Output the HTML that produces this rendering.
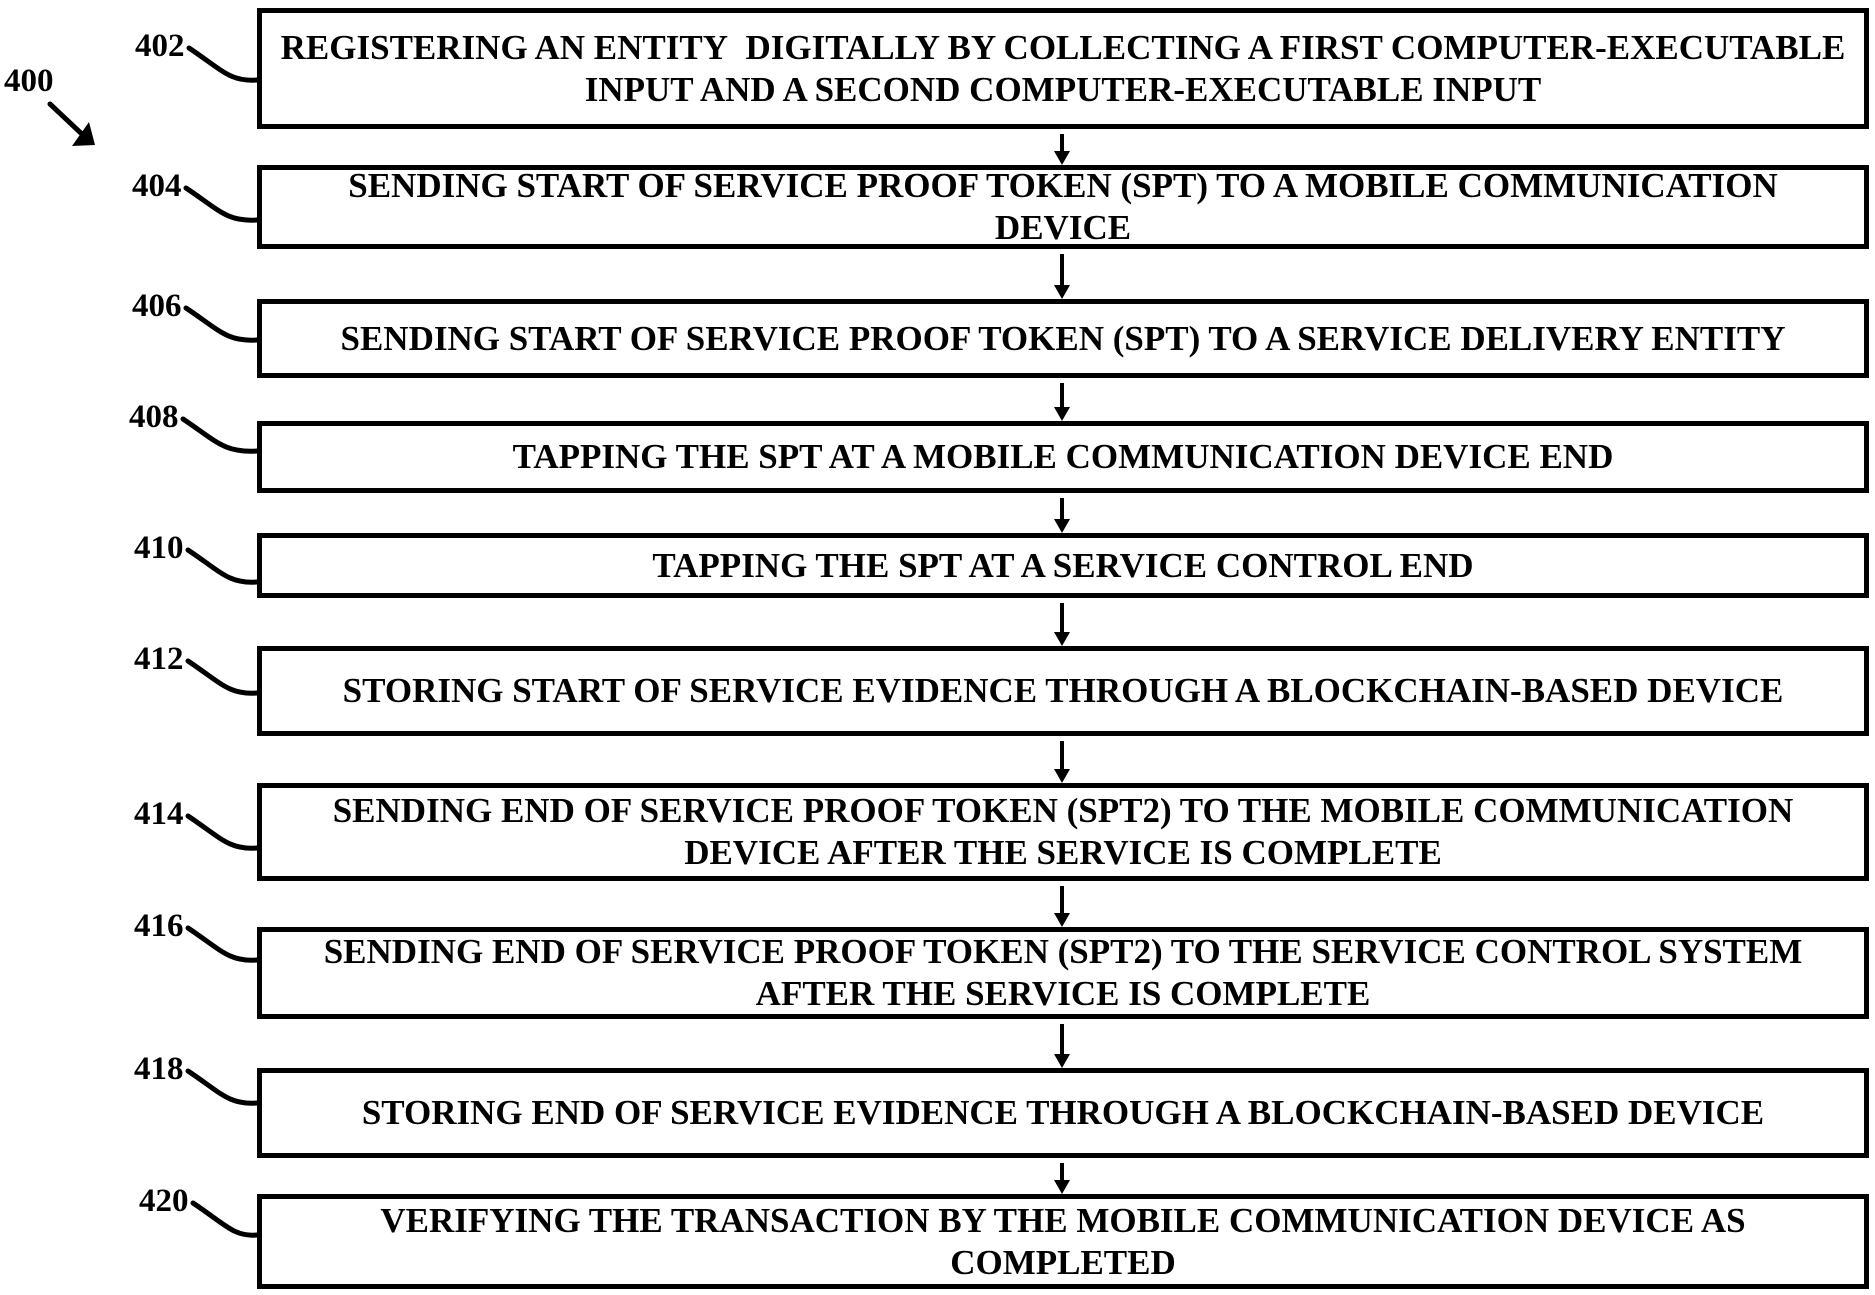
<!DOCTYPE html>
<html><head><meta charset="utf-8"><style>
html,body{margin:0;padding:0;background:#fff;width:1875px;height:1295px;overflow:hidden;position:relative}
.b{position:absolute;left:257px;width:1602px;border:5px solid #000;display:flex;align-items:center;justify-content:center;text-align:center;font-family:"Liberation Serif",serif;font-weight:bold;font-size:35px;line-height:42px;color:#000;white-space:nowrap}
.l{position:absolute;font-family:"Liberation Serif",serif;font-weight:bold;font-size:33px;color:#000;line-height:33px}
svg{position:absolute;left:0;top:0}
</style></head><body>
<svg width="1875" height="1295" viewBox="0 0 1875 1295">
<g fill="none" stroke="#000" stroke-width="5" stroke-linecap="round">
<path d="M50 104 L84 136"/>
<path d="M189 48 C222 70 230 82 257 80"/>
<path d="M186 188 C219 210 227 222 257 220"/>
<path d="M186 308 C219 330 227 342 257 340"/>
<path d="M183 419 C216 441 224 453 257 451"/>
<path d="M188 550 C221 572 229 584 257 582"/>
<path d="M188 661 C221 683 229 695 257 693"/>
<path d="M188 816 C221 838 229 850 257 848"/>
<path d="M188 928 C221 950 229 962 257 960"/>
<path d="M188 1071 C221 1093 229 1105 257 1103"/>
<path d="M193 1203 C226 1225 234 1237 257 1235"/>
</g>
<polygon points="72,146 95,145 89,122" fill="#000"/>
<g stroke="#000" stroke-width="4">
<line x1="1062" y1="134" x2="1062" y2="152"/>
<line x1="1062" y1="254" x2="1062" y2="286"/>
<line x1="1062" y1="383" x2="1062" y2="408"/>
<line x1="1062" y1="498" x2="1062" y2="520"/>
<line x1="1062" y1="603" x2="1062" y2="633"/>
<line x1="1062" y1="741" x2="1062" y2="770"/>
<line x1="1062" y1="886" x2="1062" y2="914"/>
<line x1="1062" y1="1024" x2="1062" y2="1055"/>
<line x1="1062" y1="1163" x2="1062" y2="1181"/>
</g>
<g fill="#000">
<polygon points="1054,151 1070,151 1062,165"/>
<polygon points="1054,285 1070,285 1062,299"/>
<polygon points="1054,407 1070,407 1062,421"/>
<polygon points="1054,519 1070,519 1062,533"/>
<polygon points="1054,632 1070,632 1062,646"/>
<polygon points="1054,769 1070,769 1062,783"/>
<polygon points="1054,913 1070,913 1062,927"/>
<polygon points="1054,1054 1070,1054 1062,1068"/>
<polygon points="1054,1180 1070,1180 1062,1194"/>
</g>
</svg>
<div class="l" style="left:4px;top:65px">400</div>
<div class="l" style="left:135px;top:30px">402</div>
<div class="l" style="left:132px;top:170px">404</div>
<div class="l" style="left:132px;top:290px">406</div>
<div class="l" style="left:129px;top:401px">408</div>
<div class="l" style="left:134px;top:532px">410</div>
<div class="l" style="left:134px;top:643px">412</div>
<div class="l" style="left:134px;top:798px">414</div>
<div class="l" style="left:134px;top:910px">416</div>
<div class="l" style="left:134px;top:1053px">418</div>
<div class="l" style="left:139px;top:1185px">420</div>

<div class="b" style="top:8px;height:111px">REGISTERING AN ENTITY&nbsp; DIGITALLY BY COLLECTING A FIRST COMPUTER-EXECUTABLE<br>INPUT AND A SECOND COMPUTER-EXECUTABLE INPUT</div>
<div class="b" style="top:165px;height:74px">SENDING START OF SERVICE PROOF TOKEN (SPT) TO A MOBILE COMMUNICATION<br>DEVICE</div>
<div class="b" style="top:299px;height:69px">SENDING START OF SERVICE PROOF TOKEN (SPT) TO A SERVICE DELIVERY ENTITY</div>
<div class="b" style="top:421px;height:62px">TAPPING THE SPT AT A MOBILE COMMUNICATION DEVICE END</div>
<div class="b" style="top:533px;height:55px">TAPPING THE SPT AT A SERVICE CONTROL END</div>
<div class="b" style="top:646px;height:80px">STORING START OF SERVICE EVIDENCE THROUGH A BLOCKCHAIN-BASED DEVICE</div>
<div class="b" style="top:783px;height:88px">SENDING END OF SERVICE PROOF TOKEN (SPT2) TO THE MOBILE COMMUNICATION<br>DEVICE AFTER THE SERVICE IS COMPLETE</div>
<div class="b" style="top:927px;height:82px">SENDING END OF SERVICE PROOF TOKEN (SPT2) TO THE SERVICE CONTROL SYSTEM<br>AFTER THE SERVICE IS COMPLETE</div>
<div class="b" style="top:1068px;height:80px">STORING END OF SERVICE EVIDENCE THROUGH A BLOCKCHAIN-BASED DEVICE</div>
<div class="b" style="top:1194px;height:85px">VERIFYING THE TRANSACTION BY THE MOBILE COMMUNICATION DEVICE AS<br>COMPLETED</div>
</body></html>
